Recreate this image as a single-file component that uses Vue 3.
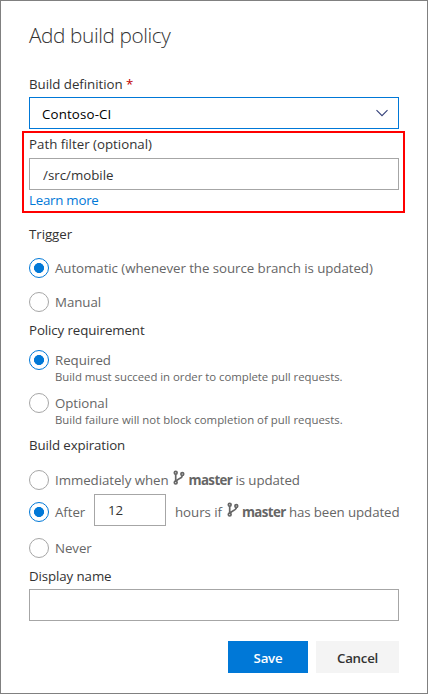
<script setup>
import { ref } from 'vue'

const path = ref('/src/mobile')
const hours = ref('12')
const displayName = ref('')
const trigger = ref('auto')
const requirement = ref('required')
const expiration = ref('after')
</script>

<template>
  <main class="panel">
    <h1 class="title">Add build policy</h1>

    <label class="label first">Build definition <span class="star">*</span></label>
    <button class="box select" type="button">
      <span>Contoso-CI</span>
      <svg class="chevron" width="14" height="10" viewBox="0 0 14 10"><path d="M1.5 1.2 L7 6.7 L12.5 1.2" /></svg>
    </button>

    <section class="highlight">
      <label class="label path-label" for="path">Path filter (optional)</label>
      <input id="path" v-model="path" class="box field path" type="text" />
      <a class="link">Learn more</a>
    </section>

    <h2 class="label trigger">Trigger</h2>
    <label class="option auto">
      <input v-model="trigger" type="radio" value="auto" />
      <span class="text">Automatic (whenever the source branch is updated)</span>
    </label>
    <label class="option manual">
      <input v-model="trigger" type="radio" value="manual" />
      <span class="text">Manual</span>
    </label>

    <h2 class="label policy">Policy requirement</h2>
    <label class="option required">
      <input v-model="requirement" type="radio" value="required" />
      <span class="text">Required</span>
    </label>
    <p class="hint">Build must succeed in order to complete pull requests.</p>
    <label class="option optional">
      <input v-model="requirement" type="radio" value="optional" />
      <span class="text">Optional</span>
    </label>
    <p class="hint second">Build failure will not block completion of pull requests.</p>

    <h2 class="label expiration">Build expiration</h2>
    <label class="option immediate">
      <input v-model="expiration" type="radio" value="now" />
      <span class="text">Immediately when</span>
      <svg class="branch" width="12" height="16" viewBox="0 0 12 16"><circle cx="2.7" cy="2.8" r="1.4" /><circle cx="2.7" cy="12.6" r="1.4" /><circle cx="9.3" cy="4" r="1.4" /><path d="M2.7 4.2V11.2M9.3 5.4C9.2 8.8 5.6 8 3.6 10.8" /></svg>
      <b>master</b>
      <span class="tail">is updated</span>
    </label>
    <div class="after">
      <label class="option">
        <input v-model="expiration" type="radio" value="after" />
        <span class="text">After</span>
      </label>
      <input v-model="hours" class="box field hours" type="text" />
      <div class="phrase">
        <span class="text">hours if</span>
        <svg class="branch" width="12" height="16" viewBox="0 0 12 16"><circle cx="2.7" cy="2.8" r="1.4" /><circle cx="2.7" cy="12.6" r="1.4" /><circle cx="9.3" cy="4" r="1.4" /><path d="M2.7 4.2V11.2M9.3 5.4C9.2 8.8 5.6 8 3.6 10.8" /></svg>
        <b>master</b>
        <span class="tail">has been updated</span>
      </div>
    </div>
    <label class="option never">
      <input v-model="expiration" type="radio" value="never" />
      <span class="text">Never</span>
    </label>

    <label class="label display" for="display">Display name</label>
    <input id="display" v-model="displayName" class="box field name" type="text" />

    <footer class="actions">
      <button class="btn save" type="button">Save</button>
      <button class="btn cancel" type="button">Cancel</button>
    </footer>
  </main>
</template>

<style>
body { margin: 0; background: #fff; }
</style>

<style scoped>
* { box-sizing: border-box; }
.panel {
  width: 428px;
  height: 694px;
  border: 1px solid #808080;
  padding: 20px 28px 0;
  background: #fff;
  display: flex;
  flex-direction: column;
  font-family: "Open Sans", "Noto Sans", sans-serif;
  font-size: 13.3px;
  letter-spacing: -0.06px;
  line-height: 20px;
  color: #666;
}
.title { margin: 0; height: 28px; line-height: 28px; font-size: 20.8px; font-weight: 300; letter-spacing: -0.4px; color: #333; }
.label { display: block; height: 20px; margin: 0; font-size: 13.3px; font-weight: 400; color: #333; white-space: nowrap; }
.first { margin-top: 25px; letter-spacing: -0.04px; }
.star { color: #c00000; }
.box {
  display: block;
  width: 370px;
  height: 32px;
  flex-shrink: 0;
  border: 1px solid #a6a6a6;
  border-radius: 0;
  background: #fff;
  font: inherit;
  letter-spacing: 0;
  outline: none;
}
.select {
  display: flex;
  align-items: center;
  justify-content: space-between;
  margin-top: 3px;
  padding: 2px 9px 0 12px;
  border-color: #0078d7;
  color: #000;
  letter-spacing: 0.15px;
}
.chevron { fill: none; stroke: #34407a; stroke-width: 1.1; }
.highlight {
  width: 383px;
  height: 82px;
  margin: 2px 0 0 -7px;
  padding: 1px 4px 0 5px;
  border: 2px solid #f00;
  flex-shrink: 0;
}
.path-label { letter-spacing: 0; }
.field { padding: 2px 13px 0; color: #333; }
.path { margin-top: 4px; }
.link { display: block; color: #0078d7; letter-spacing: -0.25px; }
.trigger { margin-top: 11px; }
.option { display: flex; height: 20px; flex-shrink: 0; white-space: nowrap; }
.option input {
  appearance: none;
  width: 20px;
  height: 20px;
  margin: 0 6px 0 0;
  flex-shrink: 0;
  border: 1px solid #a6a6a6;
  border-radius: 50%;
}
.option input:checked {
  border-color: #0078d7;
  background: radial-gradient(circle, #0078d7 4.7px, transparent 5.3px);
}
.auto { margin-top: 14px; }
.manual { margin-top: 14px; }
.policy { margin-top: 8px; letter-spacing: -0.1px; }
.required { margin-top: 10px; }
.hint { margin: 0 0 0 26px; height: 14px; line-height: 14px; font-size: 11.4px; letter-spacing: -0.04px; white-space: nowrap; }
.second { letter-spacing: 0; }
.optional { margin-top: 9px; }
.expiration { margin-top: 8px; letter-spacing: -0.12px; }
.immediate { margin-top: 15px; }
.branch { margin: 0 0 0 5px; fill: none; stroke: #666; stroke-width: 1.7; flex-shrink: 0; }
b { width: 43px; margin-left: 3px; font-weight: 700; letter-spacing: -0.6px; }
.tail { margin-left: 4px; letter-spacing: -0.1px; }
.after { display: flex; height: 32px; margin-top: 4px; flex-shrink: 0; }
.after .option { width: 65px; margin-top: 8px; }
.hours { width: 72px; padding-top: 0; }
.phrase { display: flex; margin: 8px 0 0 9px; white-space: nowrap; }
.never { margin-top: 12px; }
.display { margin-top: 8px; letter-spacing: -0.1px; }
.name { margin-top: 3px; }
.actions { display: flex; justify-content: flex-end; gap: 8px; margin: 20px 0 0; width: 370px; }
.btn { height: 32px; border: 0; padding: 2px 0 0; font: inherit; font-weight: 600; letter-spacing: -0.25px; }
.save { width: 80px; background: #0078d7; color: #fff; }
.cancel { width: 83px; background: #f4f4f4; color: #333; }
</style>
